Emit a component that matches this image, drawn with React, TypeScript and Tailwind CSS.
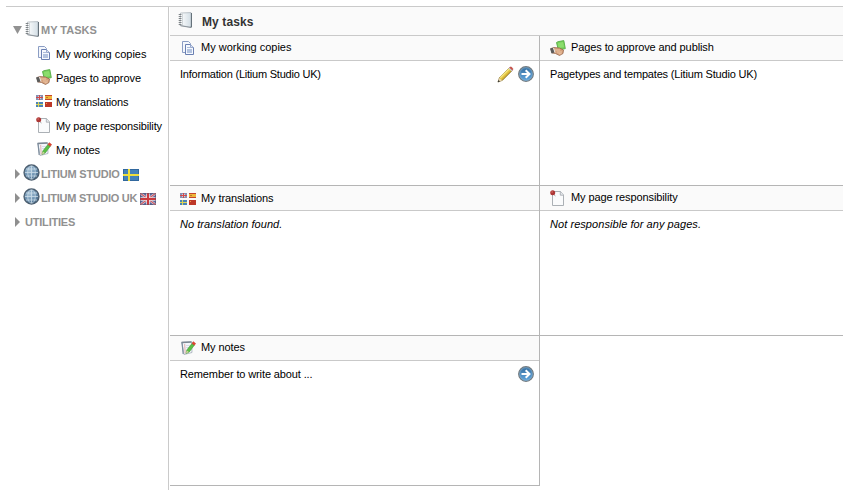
import type { ReactNode } from "react";

type IconProps = { className?: string };

function Notebook({ className = "" }: IconProps) {
  return (
    <svg viewBox="0 0 16 16" className={`h-4 w-4 shrink-0 ${className}`}>
      <defs>
        <linearGradient id="nb" x1="0" x2="1">
          <stop offset="0" stopColor="#ffffff" />
          <stop offset="1" stopColor="#d3dee5" />
        </linearGradient>
      </defs>
      <path d="M2.500 1 13 .6V14L12 15 2 13.500z" fill="url(#nb)" stroke="#a5adb4" strokeWidth=".7" />
      <path d="M4.500 1.500v12" stroke="#c0c7cc" strokeWidth=".7" />
      <path d="M13.500 1v14.200l-1.500.1" fill="none" stroke="#65717a" strokeWidth="1" />
      <path d="M2.500 13.700 12 15.400" stroke="#7b848b" strokeWidth=".8" />
      <path d="M.7 2.500h2.800M.7 4.500h2.800M.7 6.500h2.800M.7 8.500h2.800M.7 10.500h2.800M.7 12.500h2.800" stroke="#74797d" strokeWidth=".9" />
    </svg>
  );
}

function Copies({ className = "" }: IconProps) {
  return (
    <svg viewBox="0 0 16 16" className={`h-4 w-4 shrink-0 ${className}`}>
      <path d="M2.500 1.500h6l2 2v9h-8z" fill="#f4f7fc" stroke="#8b9dc4" />
      <path d="M5.500 4.500h5l3 3v7h-8z" fill="#f6f9fe" stroke="#6a80b2" />
      <path d="M10.500 4.500v3h3" fill="#d9e2f2" stroke="#8598c2" strokeWidth=".8" />
      <path d="M7 9h5v4H7z" fill="#b3c3df" />
      <path d="M7 7.500h3" stroke="#8da2ca" strokeWidth=".7" />
    </svg>
  );
}

function Approve({ className = "" }: IconProps) {
  return (
    <svg viewBox="0 0 16 16" className={`h-4 w-4 shrink-0 ${className}`}>
      <path d="M6.500 2.500 8 1.700 13.800.6 15.300 8.600 8.400 10z" fill="#77d15b" stroke="#55ab45" strokeWidth=".9" />
      <path d="M8 3.300 13 2l1 5-5.500 1z" fill="#8bdd6c" />
      <path d="M1 8.500 4 7.500 9.500 8 13.500 10 13 13.500 9.500 15.500 5.500 13.500 2 13z" fill="#d6a17c" stroke="#8e5d43" strokeWidth=".7" />
      <path d="M5 10h5M7 12h5M8.500 13.700h3" stroke="#edc7a8" strokeWidth=".9" />
      <path d="M0 8.500 3.200 7.800 4.500 12.500 1.500 13.500z" fill="#5b5b5b" />
      <path d="M3.500 8 5 12.500" stroke="#e9e9e9" />
    </svg>
  );
}

function Translations({ className = "" }: IconProps) {
  return (
    <svg viewBox="0 0 16 12" className={`h-3 w-4 shrink-0 ${className}`} shapeRendering="crispEdges">
      <path d="M0 0h7v5H0z" fill="#8791b2" />
      <path d="M3 0h1v5H3zM0 2h7v1H0z" fill="#d0494b" />
      <path d="M2 1h1v1H2zM4 1h1v1H4zM2 3h1v1H2zM4 3h1v1H4z" fill="#d4cbd8" />
      <path d="M9 0h7v5H9z" fill="#c7442e" />
      <path d="M9 1h7v3H9z" fill="#edb63b" />
      <path d="M10 2h2v1h-2z" fill="#be7630" />
      <path d="M0 7h7v5H0z" fill="#4b84b8" />
      <path d="M2 7h1v5H2zM0 9h7v1H0z" fill="#dcd557" />
      <path d="M9 7h7v5H9z" fill="#bd3727" />
      <path d="M10 8h1v1h-1z" fill="#ec9b42" />
    </svg>
  );
}

function Responsibility({ className = "" }: IconProps) {
  return (
    <svg viewBox="0 0 16 16" className={`h-4 w-4 shrink-0 ${className}`}>
      <path d="M2.500 1.500h8l3 3.500v10.500h-11z" fill="#fafbfc" stroke="#a2a7ad" strokeWidth=".9" />
      <path d="M10.300 1.500v3.700h3.200" fill="#e5e8eb" stroke="#a2a7ad" strokeWidth=".8" />
      <path d="M3 4 5.500 6" stroke="#aaa" />
      <circle cx="2.700" cy="2.700" r="2.500" fill="#ad3635" />
      <circle cx="2.100" cy="2" r=".8" fill="#d97770" />
    </svg>
  );
}

function Notes({ className = "" }: IconProps) {
  return (
    <svg viewBox="0 0 16 16" className={`h-4 w-4 shrink-0 ${className}`}>
      <path d="M1.800 2.300 11.500 1.800 12 12.500 4 14.500z" fill="#f4f6fa" stroke="#a2acb7" strokeWidth=".8" />
      <path d="M1.500 2.500 11.500 2" stroke="#7c8793" strokeWidth="1.600" />
      <path d="M4.700 4 5.200 13.500" stroke="#dd9b9a" strokeWidth=".8" />
      <path d="M6 5.500h4M6 7.500h3" stroke="#c3cfdb" strokeWidth=".6" />
      <path d="M2 2.500 3.200 14" stroke="#7d8d9d" strokeWidth="1.200" />
      <path d="M6 13.500 6.800 10 12 3.500 14.300 5.200 9.200 12z" fill="#5cc044" stroke="#3e9635" strokeWidth=".6" />
      <path d="M6 13.500 6.800 10.500 8.800 12z" fill="#d9d3a5" />
      <path d="M12 3.400 13.200 1.700 15.600 3.500 14.300 5.200z" fill="#e4442e" stroke="#c23a2c" strokeWidth=".6" />
    </svg>
  );
}

function Globe({ className = "" }: IconProps) {
  return (
    <svg viewBox="0 0 17 17" className={`h-[17px] w-[17px] shrink-0 ${className}`}>
      <defs>
        <radialGradient id="globe" cx=".4" cy=".35" r=".7">
          <stop offset="0" stopColor="#a5c1d6" />
          <stop offset=".6" stopColor="#6a8faf" />
          <stop offset="1" stopColor="#3e5c78" />
        </radialGradient>
      </defs>
      <circle cx="8.500" cy="8.500" r="7.500" fill="url(#globe)" stroke="#4d5f70" strokeWidth="1.300" />
      <path d="M8.500 2v13M2 8.500h13M3 5h11M3 12h11" stroke="#d5e4ee" strokeWidth=".9" opacity=".8" />
      <ellipse cx="8.500" cy="8.500" rx="3.800" ry="6.700" fill="none" stroke="#d5e4ee" strokeWidth=".8" opacity=".8" />
    </svg>
  );
}

function Arrow() {
  return (
    <svg viewBox="0 0 16 16" className="h-4 w-4 shrink-0">
      <defs>
        <linearGradient id="arrow" x2="0" y2="1">
          <stop offset="0" stopColor="#366e9f" />
          <stop offset="1" stopColor="#62a7df" />
        </linearGradient>
      </defs>
      <circle cx="8" cy="8" r="7.300" fill="url(#arrow)" stroke="#737b80" strokeWidth="1.300" />
      <circle cx="8" cy="8" r="6.300" fill="none" stroke="#8db5d2" strokeWidth=".6" />
      <path d="M3.500 8h8M7.700 4.200 11.500 8 7.700 11.800" fill="none" stroke="#fff" strokeWidth="2" />
    </svg>
  );
}

function Pencil() {
  return (
    <svg viewBox="0 0 17 17" className="h-[17px] w-[17px] shrink-0">
      <path d="M1 16 2.500 11.500 12 2 15 4.800 5.500 14.300z" fill="#e3c43f" stroke="#87763c" strokeWidth=".8" />
      <path d="M3.200 11.800 12.300 2.700" stroke="#f6e681" strokeWidth="1.500" />
      <path d="M5 13.700 14.400 4.500" stroke="#bb962f" strokeWidth="1" />
      <path d="M1 16 2.300 12 5 14.500z" fill="#ead6b0" />
      <path d="M.7 16.300 1.500 14 3 15.500z" fill="#333" />
      <path d="M11.500 2.500 12.500 1.500 15.500 4.300 14.500 5.300z" fill="#c9ced2" />
      <path d="M12.500 1.500q1.200-1.100 2.500 0t.6 2.800z" fill="#d44d41" stroke="#a63b36" strokeWidth=".5" />
    </svg>
  );
}

function SwedishFlag() {
  return (
    <svg viewBox="0 0 16 12" className="ml-[3px] mt-0.5 h-3 w-4 shrink-0" shapeRendering="crispEdges">
      <path d="M0 0h16v12H0z" fill="#31689e" />
      <path d="M1 1h14v10H1z" fill="#4482bb" />
      <path d="M5 0h2v12H5zM0 5h16v2H0z" fill="#efdf3d" />
    </svg>
  );
}

function BritishFlag() {
  return (
    <svg viewBox="0 0 16 12" className="ml-[3px] mt-0.5 h-3 w-4 shrink-0">
      <path d="M0 0h16v12H0z" fill="#58699d" />
      <path d="M0 0 16 12M16 0 0 12" stroke="#d9ccd9" strokeWidth="2.400" />
      <path d="M0 0 16 12M16 0 0 12" stroke="#c95b62" strokeWidth="1.100" />
      <path d="M8 0v12M0 6h16" stroke="#ecdcdf" strokeWidth="3.600" />
      <path d="M8 0v12M0 6h16" stroke="#cb393d" strokeWidth="2" />
      <path d="M.5.5h15v11H.5z" fill="none" stroke="#5b5069" strokeOpacity=".5" />
    </svg>
  );
}

function Collapsed() {
  return (
    <svg viewBox="0 0 5 10" className="ml-[15px] h-[10px] w-[5px] shrink-0">
      <path d="M0 0 5 5 0 10z" fill="#8f8f8f" />
    </svg>
  );
}

function NavItem({ icon, tracking = "", children }: { icon: ReactNode; tracking?: string; children: ReactNode }) {
  return (
    <li className="flex h-6 items-center pl-9">
      {icon}
      <span className={`ml-1 whitespace-nowrap ${tracking}`}>{children}</span>
    </li>
  );
}

function Panel({
  icon,
  title,
  titleClass = "mb-0.5",
  bodyClass = "",
  action,
  className = "border-r",
  children,
}: {
  icon: ReactNode;
  title: ReactNode;
  titleClass?: string;
  bodyClass?: string;
  action?: ReactNode;
  className?: string;
  children: ReactNode;
}) {
  return (
    <section className={`h-[150px] border-b border-[#b5b5b5] ${className}`}>
      <h2 className="flex h-[25px] items-center border-b border-[#c9c9c9] bg-[#fafafa] pl-[10px]">
        {icon}
        <span className={`ml-[5px] whitespace-nowrap ${titleClass}`}>{title}</span>
      </h2>
      <div className="flex h-[26px] items-center justify-between pl-[10px] pr-[5px]">
        <span className={`whitespace-nowrap ${bodyClass}`}>{children}</span>
        {action}
      </div>
    </section>
  );
}

export default function App() {
  return (
    <div className="h-[497px] w-[843px] overflow-hidden bg-white pl-[6px] pt-[6px] font-['Liberation_Sans',Arial,sans-serif] text-[11px] leading-[14px] text-black">
      <div className="flex h-[484px] border-t border-[#cacaca]">
        <nav className="-ml-[6px] w-[169px] shrink-0 border-r border-[#cacaca] pt-[11px]">
          <div className="flex h-6 items-center font-bold text-[#919191]">
            <svg viewBox="0 0 9 8" className="ml-[13px] h-2 w-[9px]">
              <path d="M0 0h9L4.500 8z" fill="#929292" />
            </svg>
            <Notebook className="mb-0.5 ml-[3px]" />
            <span className="whitespace-nowrap">MY TASKS</span>
          </div>
          <ul>
            <NavItem icon={<Copies className="mb-0.5" />}>My working copies</NavItem>
            <NavItem icon={<Approve className="mb-0.5" />} tracking="tracking-[-0.08px]">Pages to approve</NavItem>
            <NavItem icon={<Translations className="mb-0.5" />} tracking="tracking-[-0.1px]">My translations</NavItem>
            <NavItem icon={<Responsibility className="mb-0.5" />} tracking="tracking-[-0.13px]">My page responsibility</NavItem>
            <NavItem icon={<Notes className="mb-0.5" />} tracking="tracking-[-0.1px]">My notes</NavItem>
          </ul>
          <div className="flex h-6 items-center font-bold text-[#919191]">
            <Collapsed />
            <Globe className="mb-[3px] ml-[3px]" />
            <span className="ml-px whitespace-nowrap tracking-[-0.2px]">LITIUM STUDIO</span>
            <SwedishFlag />
          </div>
          <div className="flex h-6 items-center font-bold text-[#919191]">
            <Collapsed />
            <Globe className="mb-[3px] ml-[3px]" />
            <span className="ml-px whitespace-nowrap tracking-[-0.25px]">LITIUM STUDIO UK</span>
            <BritishFlag />
          </div>
          <div className="flex h-6 items-center font-bold text-[#919191]">
            <Collapsed />
            <span className="ml-[5px] tracking-[-0.2px]">UTILITIES</span>
          </div>
        </nav>
        <main className="ml-px min-w-0 flex-1">
          <header className="flex h-[29px] items-center border-b border-[#c9c9c9] bg-[#fafafa] pl-2">
            <Notebook className="mb-0.5" />
            <h1 className="ml-2 mt-px text-[12px] font-bold tracking-[0.1px] text-[#333]">My tasks</h1>
          </header>
          <div className="grid grid-cols-[370px_1fr]">
            <Panel
              icon={<Copies />}
              title="My working copies"
              bodyClass="tracking-[-0.22px]"
              action={<span className="flex items-start gap-1"><Pencil /><Arrow /></span>}
            >
              Information (Litium Studio UK)
            </Panel>
            <Panel
              icon={<Approve />}
              title="Pages to approve and publish"
              titleClass="mb-0.5 tracking-[-0.1px]"
              bodyClass="tracking-[-0.17px]"
              className=""
            >
              Pagetypes and tempates (Litium Studio UK)
            </Panel>
            <Panel
              icon={<Translations className="mt-0.5" />}
              title="My translations"
              titleClass="tracking-[-0.1px]"
              bodyClass="tracking-[0.04px]"
            >
              <i>No translation found.</i>
            </Panel>
            <Panel
              icon={<Responsibility />}
              title="My page responsibility"
              titleClass="mb-0.5 tracking-[-0.1px]"
              bodyClass="tracking-[0.06px]"
              className=""
            >
              <i>Not responsible for any pages.</i>
            </Panel>
            <Panel
              icon={<Notes />}
              title="My notes"
              titleClass="mb-0.5 tracking-[-0.1px]"
              bodyClass="tracking-[-0.12px]"
              action={<Arrow />}
            >
              Remember to write about ...
            </Panel>
          </div>
        </main>
      </div>
    </div>
  );
}
